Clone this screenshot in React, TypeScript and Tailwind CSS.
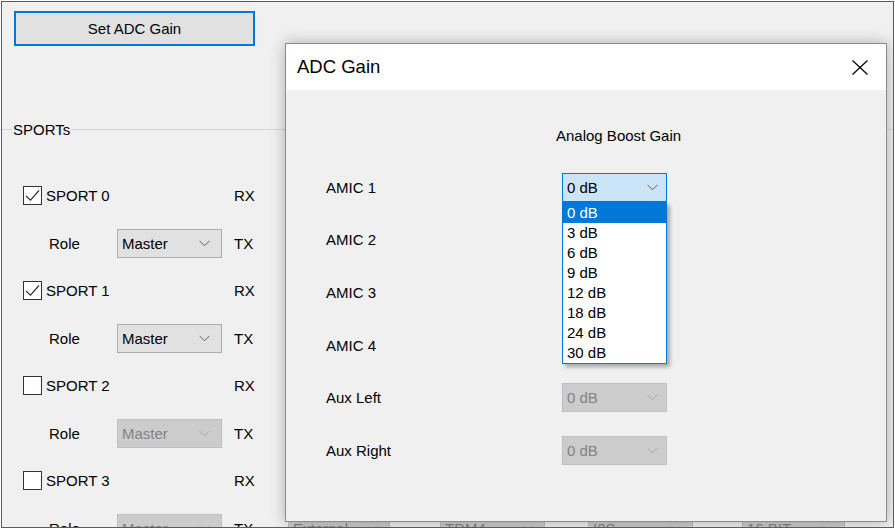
import React from "react";

type Variant = "normal" | "focus" | "disabled";

const variantClass: Record<Variant, string> = {
  normal: "border-[#adadad] bg-[#e1e1e1] text-black",
  focus: "border-[#0078d7] bg-[#cce4f7] text-black",
  disabled: "border-[#bfbfbf] bg-[#cccccc] text-[#838383]",
};

const chevronColor: Record<Variant, string> = {
  normal: "#606060",
  focus: "#606060",
  disabled: "#a8a8a8",
};

function Chevron({ color }: { color: string }) {
  return (
    <svg width="11" height="7" viewBox="0 0 11 7" className="shrink-0">
      <polyline points="0.5,0.8 5.5,5.8 10.5,0.8" fill="none" stroke={color} strokeWidth="1" />
    </svg>
  );
}

function Combo({
  value,
  variant = "normal",
  className = "",
  children,
}: {
  value: string;
  variant?: Variant;
  className?: string;
  children?: React.ReactNode;
}) {
  return (
    <div
      className={`relative flex h-[29px] shrink-0 items-center justify-between border pl-[4px] ${variantClass[variant]} ${className}`}
    >
      <span className="leading-none">{value}</span>
      <Chevron color={chevronColor[variant]} />
      {children}
    </div>
  );
}

function Checkbox({ checked }: { checked: boolean }) {
  return (
    <span className="flex h-[19px] w-[19px] shrink-0 items-center justify-center border border-[#333333] bg-white">
      {checked && (
        <svg width="17" height="17" viewBox="0 0 17 17">
          <polyline points="2,9 6.5,13.2 15,3.5" fill="none" stroke="#333333" strokeWidth="1.2" />
        </svg>
      )}
    </span>
  );
}

const sports = [
  { name: "SPORT 0", checked: true },
  { name: "SPORT 1", checked: true },
  { name: "SPORT 2", checked: false },
  { name: "SPORT 3", checked: false },
];

const gains = ["0 dB", "3 dB", "6 dB", "9 dB", "12 dB", "18 dB", "24 dB", "30 dB"];

// AMIC 2-4 combos sit under the open list, so only their labels show
const channels: { label: string; variant?: Variant }[] = [
  { label: "AMIC 1", variant: "focus" },
  { label: "AMIC 2" },
  { label: "AMIC 3" },
  { label: "AMIC 4" },
  { label: "Aux Left", variant: "disabled" },
  { label: "Aux Right", variant: "disabled" },
];

function GainList() {
  return (
    <div className="absolute left-[-1px] top-[28px] z-10 w-[105px] border border-[#0078d7] bg-white shadow-[3px_3px_4px_rgba(0,0,0,0.3)]">
      {gains.map((g, i) => (
        <div
          key={g}
          className={`flex h-[20px] items-center pl-[4px] leading-none ${
            i === 0 ? "bg-[#0078d7] text-white" : "text-black"
          }`}
        >
          {g}
        </div>
      ))}
    </div>
  );
}

function AdcGainDialog() {
  return (
    <div className="absolute left-[283px] top-[41px] flex h-[479px] w-[602px] flex-col border border-[#8a8a8a] bg-[#f0f0f0] shadow-[0_0_14px_rgba(0,0,0,0.28)]">
      <div className="flex h-[46px] shrink-0 items-center justify-between bg-white pl-[11px] pr-[18px]">
        <span className="text-[18.5px] leading-none">ADC Gain</span>
        <svg width="16" height="15" viewBox="0 0 16 15">
          <line x1="0.5" y1="0.5" x2="15.5" y2="14.5" stroke="#000" strokeWidth="1.2" />
          <line x1="15.5" y1="0.5" x2="0.5" y2="14.5" stroke="#000" strokeWidth="1.2" />
        </svg>
      </div>
      <div className="flex flex-col pt-[35px]">
        <div className="flex h-[20px] items-center pl-[270px] leading-none">Analog Boost Gain</div>
        <div className="mt-[16px] flex flex-col">
          {channels.map((c, i) => (
            <div key={c.label} className="flex h-[52.6px] items-center pl-[40px]">
              <span className="w-[236px] leading-none">{c.label}</span>
              {c.variant && (
                <Combo value="0 dB" variant={c.variant} className="w-[105px] pr-[8px]">
                  {i === 0 && <GainList />}
                </Combo>
              )}
            </div>
          ))}
        </div>
      </div>
    </div>
  );
}

export default function App() {
  return (
    <div className="h-[529px] w-[895px] bg-white p-px font-['Liberation_Sans',Arial,sans-serif] text-[15px] text-black">
      <div className="relative h-full w-full overflow-hidden border border-[#5b5b5b] bg-[#f0f0f0]">
        <button
          type="button"
          className="ml-[12px] mt-[9px] flex h-[35px] w-[241px] items-center justify-center border-2 border-[#0078d7] bg-[#e1e1e1] leading-none"
        >
          Set ADC Gain
        </button>

        <div className="mt-[73px] flex h-[20px] items-center">
          <div className="h-px w-[10px] bg-[#d5d5d5]" />
          <span className="px-px leading-none">SPORTs</span>
          <div className="h-px flex-1 bg-[#d5d5d5]" />
        </div>

        <div className="mt-[33px] flex flex-col">
          {sports.map((s, i) => {
            const v: Variant = s.checked ? "normal" : "disabled";
            return (
              <React.Fragment key={s.name}>
                <div className="flex h-[47px] items-center pl-[21px]">
                  <div className="flex w-[211px] items-center gap-[4px]">
                    <Checkbox checked={s.checked} />
                    <span className="leading-none">{s.name}</span>
                  </div>
                  <span className="leading-none">RX</span>
                </div>
                <div className="flex h-[48px] shrink-0 items-center pl-[47px]">
                  <span className="w-[68px] leading-none">Role</span>
                  <Combo value="Master" variant={v} className="w-[105px] pr-[11px]" />
                  <span className="ml-[12px] w-[54px] leading-none">TX</span>
                  {i === sports.length - 1 && (
                    <>
                      <Combo value="External" variant={v} className="w-[102px] pr-[11px]" />
                      <Combo value="TDM4" variant={v} className="ml-[50px] w-[105px] pr-[11px]" />
                      <Combo value="I2S" variant={v} className="ml-[43px] w-[105px] pr-[11px]" />
                      <Combo value="16 BIT" variant={v} className="ml-[49px] w-[103px] pr-[11px]" />
                    </>
                  )}
                </div>
              </React.Fragment>
            );
          })}
        </div>

        <AdcGainDialog />
      </div>
    </div>
  );
}
